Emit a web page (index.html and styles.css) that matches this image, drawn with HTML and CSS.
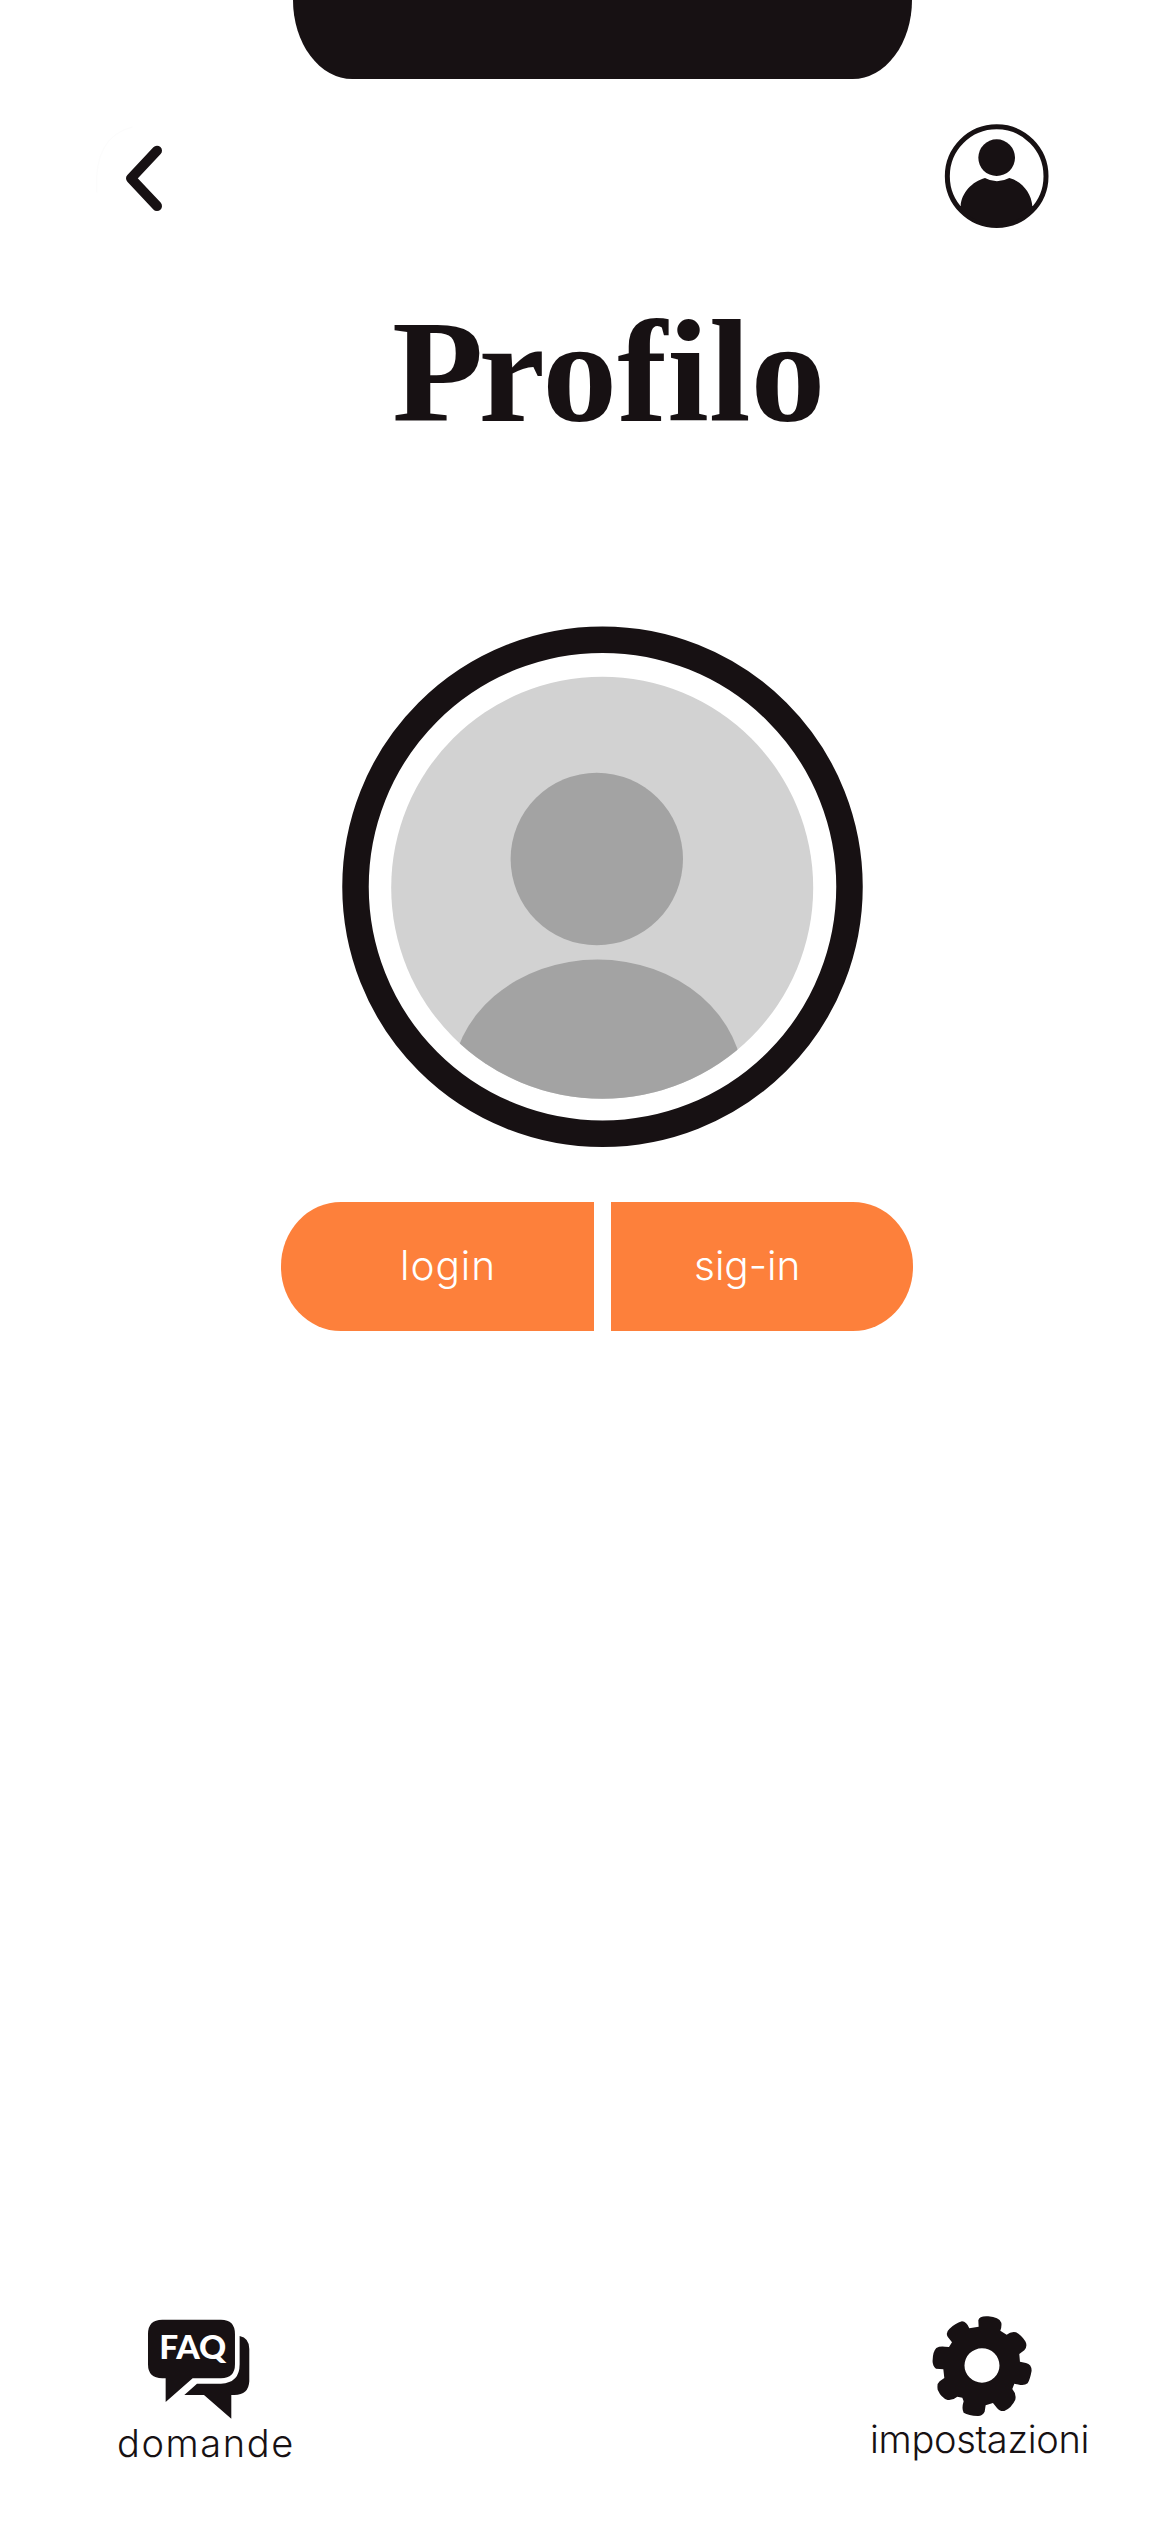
FILE: index.html
```html
<!DOCTYPE html>
<html lang="it">
<head>
<meta charset="utf-8">
<title>Profilo</title>
<link rel="stylesheet" href="styles.css">
</head>
<body>
<div class="notch"></div>
<header class="topbar">
  <a class="back" aria-label="Indietro">
    <svg viewBox="0 0 360 360" fill="none" stroke-linecap="round" stroke-linejoin="round">
      <path d="M20 245Q10 80 125 52" stroke="#fcfcfc" stroke-width="3"/>
      <path d="M201 122L123 205L201 288" stroke="#171113" stroke-width="30"/>
    </svg>
  </a>
  <a class="account" aria-label="Account">
    <svg viewBox="0 0 390 390">
      <circle cx="200" cy="198.500" r="148" fill="none" stroke="#171113" stroke-width="15"/>
      <circle cx="200" cy="143" r="55" fill="#171113"/>
      <path d="M92 288C94 249 127 214 165 204Q200 224 238 204C276 214 304 249 307 288L314 290A150 150 0 0 1 86 290Z" fill="#171113"/>
    </svg>
  </a>
</header>
<main class="profile">
  <h1 class="title"><span class="kern-p">P</span>rofilo</h1>
  <svg class="avatar" viewBox="342 626 522 522">
    <defs><clipPath id="disc"><circle cx="602.200" cy="887.700" r="211"/></clipPath></defs>
    <circle cx="602.500" cy="886.700" r="247" fill="#fff" stroke="#171113" stroke-width="26.500"/>
    <g clip-path="url(#disc)">
      <rect x="390" y="675" width="425" height="426" fill="#d2d2d2"/>
      <circle cx="596.800" cy="859" r="86.200" fill="#a3a3a3"/>
      <ellipse cx="597.500" cy="1084.500" rx="146" ry="125" fill="#a3a3a3"/>
    </g>
  </svg>
  <div class="actions">
    <a class="action login"><span>login</span></a>
    <a class="action signin"><span>sig-in</span></a>
  </div>
</main>
<footer class="bottom">
  <a class="link faq">
    <svg viewBox="130 45 340 325">
      <path d="M188 59H364Q406 59 406 102V193Q406 235 364 235H279L198 306V235H188Q145 235 145 193V102Q145 59 188 59Z" fill="#171113"/>
      <path d="M420 108Q449 114 449 147V244Q447 285 404 285H395V356L313 285H254L292 251H364Q420 249 420 193Z" fill="#171113"/>
      <text class="faq-text" x="179" y="178" textLength="201" lengthAdjust="spacingAndGlyphs">FAQ</text>
    </svg>
    <span>domande</span>
  </a>
  <a class="link settings">
    <svg viewBox="235 35 325 325">
      <path fill-rule="evenodd" fill="#171113" d="M386 60Q389 46 416 48Q448 50 455 67Q457 78 452 91L471 103Q484 93 499 96Q514 103 527 123Q535 137 524 150L509 161L511 184L529 188Q546 192 546 211Q541 238 534 249Q526 256 512 254L494 250L488 266Q501 281 497 298Q486 322 464 332Q450 334 442 323L430 308L408 315L405 334Q397 348 384 347Q357 346 342 337Q335 325 342 303L338 292L323 289Q309 301 294 299Q275 293 264 268Q261 250 270 243L284 233L281 207L259 205Q247 196 249 178Q250 153 260 143Q270 137 286 139L298 140L307 126L294 109Q287 97 299 86Q316 69 337 63Q351 64 359 84L387 79ZM397 144A52 51 0 1 0 397 247A52 51 0 1 0 397 144Z"/>
    </svg>
    <span>impostazioni</span>
  </a>
</footer>
</body>
</html>
```
FILE: styles.css
```css
* { box-sizing: border-box; }
body {
  margin: 0;
  width: 1170px;
  height: 2532px;
  display: flex;
  flex-direction: column;
  background: #fff;
  color: #171113;
  font-family: Inter, sans-serif;
  font-weight: 300;
  overflow: hidden;
}
svg { display: block; }
.notch {
  flex: none;
  width: 619px;
  height: 79px;
  margin-left: 293px;
  background: #171113;
  border-radius: 0 0 60px 60px / 0 0 80px 80px;
}
.topbar {
  display: flex;
  justify-content: space-between;
  height: 130px;
  padding: 31px 110px 0 90px;
}
.back svg { width: 120px; height: 120px; }
.account svg { width: 130px; height: 130px; }
.profile {
  display: flex;
  flex-direction: column;
  align-items: flex-start;
}
.title {
  margin: 83px 0 0 392px;
  font: bold 147px/160px "Liberation Serif", serif;
  height: 160px;
  transform-origin: left;
  transform: scaleX(1.02);
}
.kern-p { letter-spacing: -5px; }
.avatar {
  width: 522px;
  height: 522px;
  margin: 174px 0 0 342px;
}
.actions {
  display: flex;
  gap: 17px;
  margin: 54px 0 0 281px;
}
.action {
  display: flex;
  height: 129px;
  background: #fd803b;
  color: #fff;
  font-size: 40.500px;
  line-height: 127px;
}
.login {
  width: 313px;
  padding-left: 119px;
  letter-spacing: 1px;
  border-radius: 60px 0 0 60px / 64px 0 0 64px;
}
.signin {
  width: 302px;
  padding-left: 83px;
  border-radius: 0 60px 60px 0 / 0 64px 64px 0;
}
.bottom {
  display: flex;
  justify-content: space-between;
  margin-top: auto;
  height: 220px;
  padding: 0 82px 0 117px;
  font-size: 38px;
  line-height: 50px;
}
.link { display: flex; flex-direction: column; }
.faq svg {
  width: 113.300px;
  height: 108.300px;
  margin: 3px 0 0 26.300px;
}
.faq span {
  margin-top: -5px;
  letter-spacing: 1.600px;
}
.faq-text {
  font: 900 95px Lato, sans-serif;
  fill: #fff;
}
.settings { width: 218px; }
.settings svg {
  width: 108.300px;
  height: 108.300px;
  margin: 0 0 0 58.300px;
}
.settings span {
  margin-top: -6px;
  letter-spacing: -0.300px;
}
```
